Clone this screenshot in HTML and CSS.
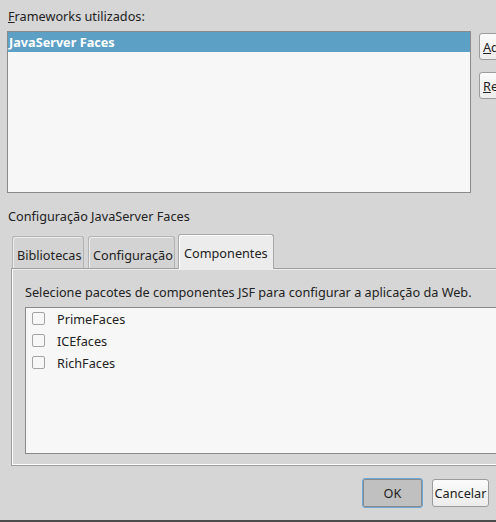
FILE: index.html
```html
<!DOCTYPE html>
<html>
<head>
<meta charset="utf-8">
<link rel="stylesheet" href="styles.css">
</head>
<body>
<div class="dialog">
  <div class="top">
    <div class="left">
      <div class="label"><span class="u">F</span>rameworks utilizados:</div>
      <div class="listbox">
        <div class="row selected">JavaServer Faces</div>
      </div>
    </div>
    <div class="side">
      <button class="btn side-btn"><span class="u">A</span>dicionar...</button>
      <button class="btn side-btn"><span class="u">R</span>emover</button>
    </div>
  </div>
  <div class="section">Configuração JavaServer Faces</div>
  <div class="tabs">
    <div class="tab t1">Bibliotecas</div>
    <div class="tab t2">Configuração</div>
    <div class="tab t3 active">Componentes</div>
  </div>
  <div class="panel">
    <div class="hint">Selecione pacotes de componentes JSF para configurar a aplicação da Web.</div>
    <div class="checklist">
      <div class="item"><span class="box"></span><span>PrimeFaces</span></div>
      <div class="item"><span class="box"></span><span>ICEfaces</span></div>
      <div class="item"><span class="box"></span><span>RichFaces</span></div>
    </div>
  </div>
  <div class="footer">
    <button class="btn ok">OK</button>
    <button class="btn cancel">Cancelar</button>
  </div>
  <div class="bottombar"></div>
</div>
</body>
</html>
```
FILE: styles.css
```css
html, body {
  margin: 0;
  padding: 0;
  width: 496px;
  height: 522px;
  overflow: hidden;
  background: #d6d6d6;
}
.dialog {
  font-family: "Noto Sans", "Open Sans", sans-serif;
  font-size: 12.7px;
  color: #222;
  width: 496px;
  height: 522px;
  display: flex;
  flex-direction: column;
  overflow: hidden;
}
.u { text-decoration: underline; }
.top {
  display: flex;
  height: 193px;
  overflow: hidden;
}
.left {
  margin-left: 7px;
  width: 464px;
  flex: none;
}
.label {
  height: 31px;
  padding-left: 1px;
  box-sizing: border-box;
  padding-top: 8px;
  line-height: 17px;
}
.listbox {
  height: 162px;
  box-sizing: border-box;
  border: 1px solid #8a8a8a;
  background: #f7f7f7;
}
.row {
  height: 20px;
  line-height: 20px;
  padding-left: 1px;
}
.row.selected {
  background: #5da0c6;
  color: #fff;
  font-weight: bold;
}
.side {
  margin-left: 8px;
  padding-top: 33px;
  display: flex;
  flex-direction: column;
  gap: 12px;
  flex: none;
}
.btn {
  font-family: inherit;
  font-size: 12.7px;
  color: #222;
  background: linear-gradient(#fbfbfb, #ececec);
  border: 1px solid #9c9c9c;
  border-radius: 3px;
  padding: 0;
  box-sizing: border-box;
}
.side-btn {
  width: 84px;
  height: 27px;
  text-align: left;
  padding-left: 3px;
  white-space: nowrap;
}
.section {
  height: 41px;
  padding-left: 8px;
  padding-top: 14px;
  box-sizing: border-box;
  line-height: 18px;
}
.tabs {
  display: flex;
  align-items: flex-end;
  height: 34px;
  margin-left: 12px;
  position: relative;
  z-index: 1;
}
.tab {
  box-sizing: border-box;
  height: 32px;
  border: 1px solid #b4b4b4;
  border-bottom: none;
  border-radius: 3px 3px 0 0;
  background: #d3d3d3;
  padding-left: 4px;
  line-height: 36px;
  white-space: nowrap;
  box-shadow: inset 1px 1px 0 #ececec;
}
.t1 { width: 72px; margin-right: 4px; }
.t2 { width: 87px; margin-right: 3px; }
.t3 { width: 96px; }
.tab.active {
  height: 35px;
  margin-bottom: -1px;
  background: #ececec;
  border-color: #a8a8a8;
  box-shadow: inset 1px 1px 0 #fff;
  padding-left: 5px;
  line-height: 36px;
}
.panel {
  margin-left: 11px;
  height: 199px;
  box-sizing: border-box;
  border: 1px solid #9e9e9e;
  border-right: none;
  box-shadow: inset 1px 0 0 #fff, inset 0 -1px 0 #fff, inset 0 1px 0 #ededed;
  padding-left: 13px;
  padding-top: 14px;
}
.hint {
  line-height: 18px;
  height: 24px;
  white-space: nowrap;
}
.checklist {
  height: 147px;
  box-sizing: border-box;
  border: 1px solid #8a8a8a;
  border-right: none;
  background: #f7f7f7;
  padding-left: 6px;
}
.item {
  height: 22px;
  display: flex;
  align-items: center;
}
.box {
  width: 13px;
  height: 13px;
  box-sizing: border-box;
  border: 1px solid #a3a3a3;
  border-radius: 2px;
  background: #f7f7f7;
  margin-right: 12px;
  flex: none;
}
.footer {
  display: flex;
  justify-content: flex-end;
  align-items: center;
  gap: 9px;
  padding-right: 7px;
  height: 53px;
  box-sizing: border-box;
  padding-top: 1px;
}
.ok {
  width: 61px;
  height: 30px;
  background: #c0c0c0;
  border: 1px solid #6ba7d8;
  box-shadow: inset 0 0 0 1px #8a8a8a;
}
.cancel {
  width: 57px;
  height: 28px;
}
.bottombar {
  margin-top: 1px;
  height: 2px;
  background: #4c4c4c;
}
```
